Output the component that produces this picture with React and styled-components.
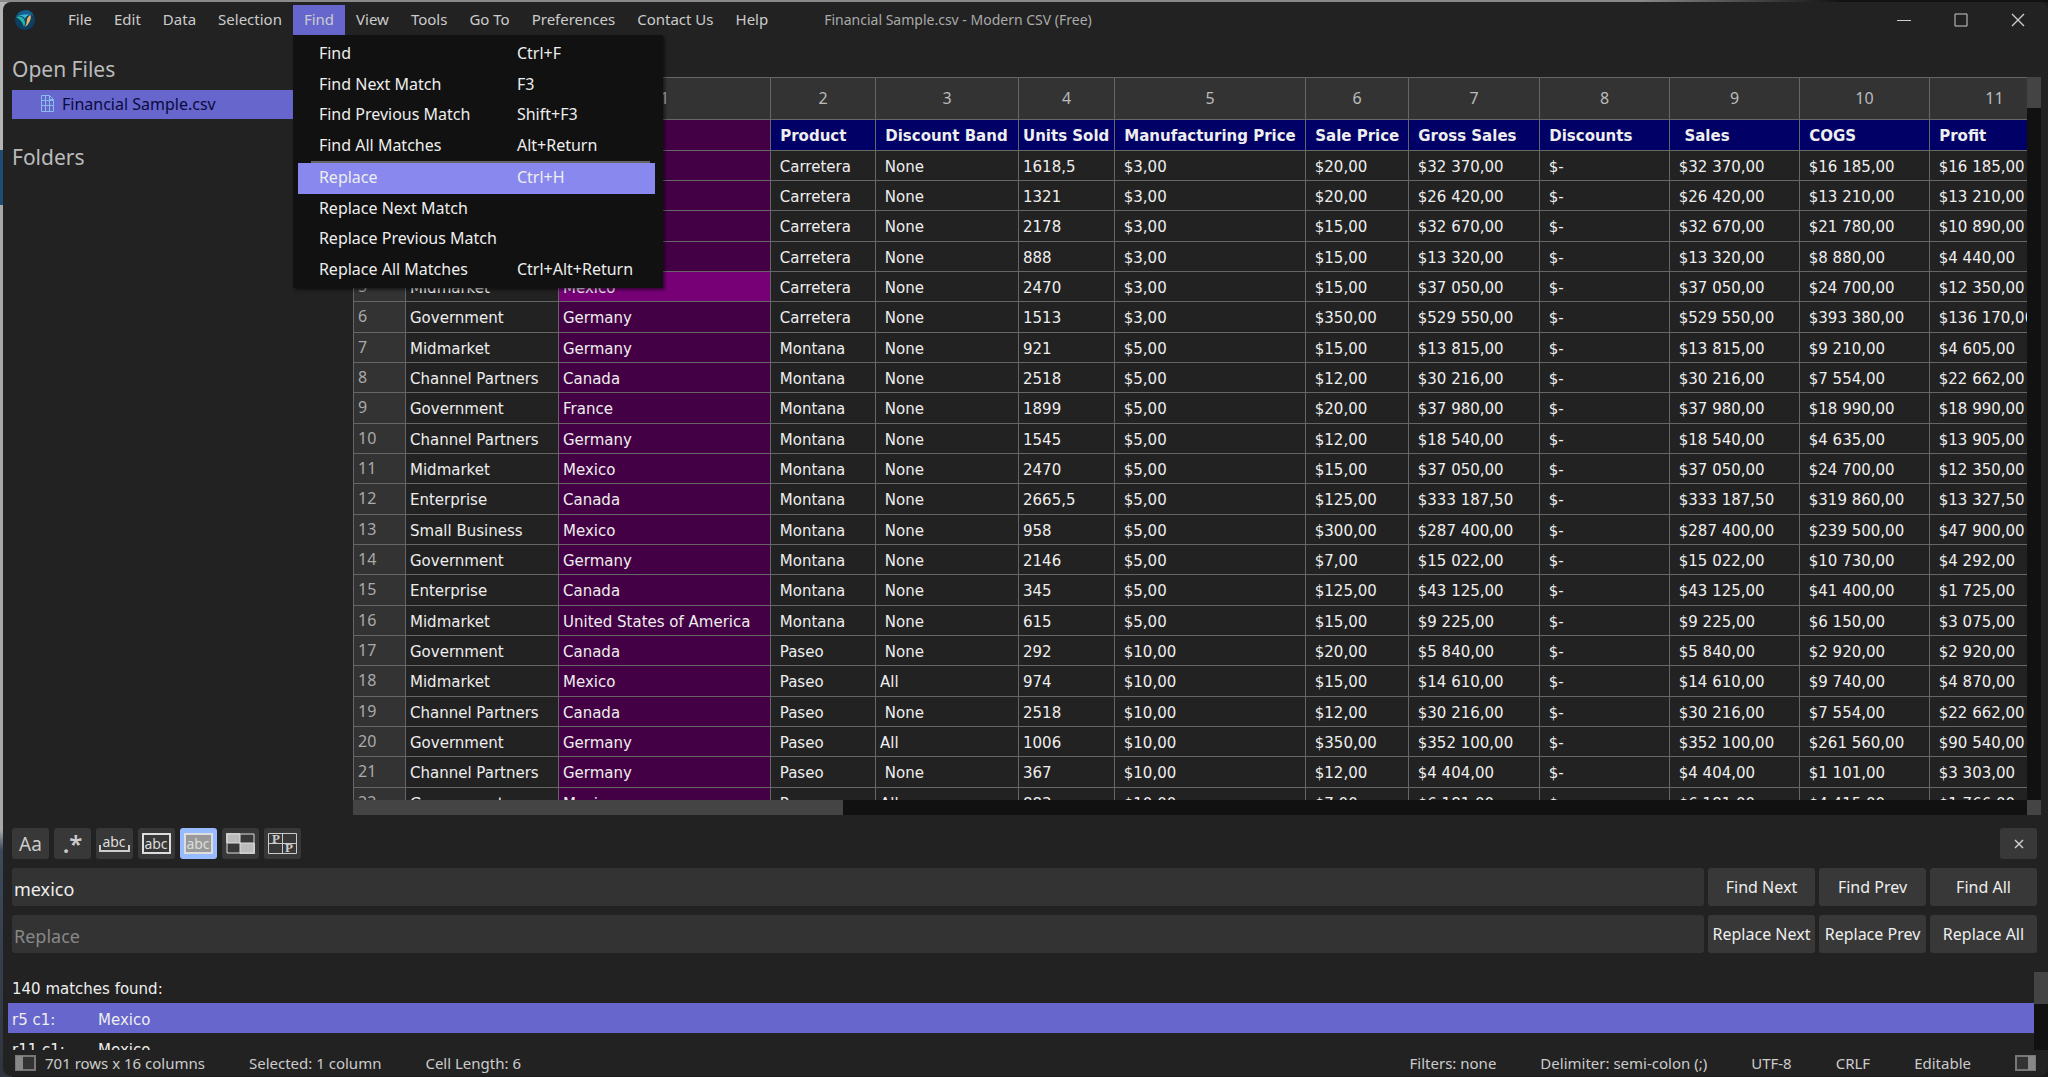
import React from 'react'
import styled, { createGlobalStyle } from 'styled-components'

const UI = '"Noto Sans", "Open Sans", sans-serif'
const DATA = '"DejaVu Sans", sans-serif'

const GlobalStyle = createGlobalStyle`
  * {
    box-sizing: border-box;
  }

  body {
    margin: 0;
    background: #222;
    font-family: ${UI};
    font-size: 15px;
    color: #ccc;
  }

  button, input {
    font-family: inherit;
    border: 0;
    margin: 0;
    padding: 0;
  }
`

const Desktop = styled.div`
  display: flex;
  height: 100vh;
  padding: 2px 0 1px 3px;
  background: linear-gradient(90deg, #8a8a8a 80%, #111 90%) 0 0 / 100% 2px no-repeat,
    linear-gradient(#b4b4b4 150px, #1d4c74 150px, #1d4c74 205px, #a8a8a8 205px, #a8a8a8 830px, #3b4a5c 850px, #30343c 100%) 0 0 / 12px 100% no-repeat,
    #1a1a1a;
`

const Window = styled.div`
  flex: 1;
  min-width: 0;
  display: flex;
  flex-direction: column;
  background: #222;
  border-radius: 8px;
  overflow: hidden;
`

const TitleBar = styled.header`
  display: flex;
  align-items: center;
  height: 33px;
  padding: 3px 0 0 12px;
`

const Logo = styled.svg`
  width: 20px;
  height: 20px;
  margin-right: 22px;
`

const MenuBar = styled.nav`
  display: flex;
`

const MenuHolder = styled.div`
  position: relative;
`

const MenuButton = styled.button`
  height: 30px;
  padding: 0 11px 2px;
  font-size: 15px;
  line-height: 28px;
  color: #ccc;
  background: ${(props) => (props.$open ? '#6666cc' : 'transparent')};
`

const Menu = styled.div`
  position: absolute;
  z-index: 2;
  top: 30px;
  left: 0;
  width: 370px;
  padding: 4px 8px 3px 5px;
  background: #111;
  box-shadow: 2px 2px 3px rgba(0, 0, 0, 0.5);
`

const MenuItem = styled.button`
  display: grid;
  grid-template-columns: 198px 1fr;
  align-items: center;
  width: 100%;
  height: ${(props) => (props.$tall ? 31 : 30)}px;
  padding: 0 0 3px 21px;
  font-size: 16px;
  line-height: 24px;
  white-space: nowrap;
  text-align: left;
  color: #eee;
  background: ${(props) => (props.$active ? '#8888ee' : 'transparent')};
`

const Separator = styled.hr`
  height: 2px;
  margin: 0 5px 0 13px;
  border: 0;
  background: #666;
`

const Title = styled.h1`
  flex: 1;
  margin: 0 0 0 45px;
  padding-bottom: 2px;
  font-size: 14px;
  font-weight: 400;
  color: #aaa;
`

const WindowControls = styled.div`
  display: flex;
  gap: 13px;
  margin-right: 8px;
`

const WindowControl = styled.button`
  display: grid;
  place-items: center;
  width: 44px;
  height: 30px;
  color: #ccc;
  background: transparent;
`

const Main = styled.main`
  flex: 1;
  min-height: 0;
  display: flex;
`

const Sidebar = styled.aside`
  flex: none;
  width: 350px;
  padding: 18px 8px 0 9px;
`

const SideHeading = styled.h2`
  margin: 0;
  font-size: 21px;
  line-height: 32px;
  font-weight: 400;
  color: #bbb;
`

const FileLink = styled.a`
  display: flex;
  align-items: center;
  gap: 7px;
  height: 29px;
  margin: 5px 0 22px;
  padding: 0 0 2px 28px;
  font-size: 16px;
  text-decoration: none;
  color: #0a0a3c;
  background: #6666cc;
`

const Editor = styled.section`
  flex: 1;
  min-width: 0;
  display: grid;
  grid-template-columns: 1fr 14px;
  grid-template-rows: 1fr 15px;
  padding: 42px 7px 0 0;
`

const Sheet = styled.div`
  min-height: 0;
  overflow: hidden;
`

const Table = styled.table`
  width: 1706px;
  table-layout: fixed;
  border-collapse: separate;
  border-spacing: 0;
  font-family: ${DATA};
  font-size: 15px;
  color: #eee;
`

const ColumnNumber = styled.th`
  height: 43px;
  padding: 0 0 2px;
  border: solid #666;
  border-width: 1px 0 1px 1px;
  font-family: ${UI};
  font-size: 16px;
  font-weight: 400;
  color: #bbb;
  background: #333;
`

const Row = styled.tr`
  height: 30px;

  &:nth-child(3n + 1) {
    height: 31px;
  }
`

const RowNumber = styled.th`
  padding: 0 0 2px 4px;
  border: solid #666;
  border-width: 0 0 1px 1px;
  font-family: ${UI};
  font-size: 16px;
  line-height: 20px;
  font-weight: 400;
  text-align: left;
  color: #aaa;
  background: #333;
`

const cellColors = {
  header: '#000066',
  selected: '#440044',
  current: '#770077'
}

const Cell = styled.td`
  padding: 2px 0 0 4px;
  border: solid #666;
  border-width: 0 0 1px 1px;
  line-height: 20px;
  font-weight: ${(props) => (props.$bold ? 700 : 400)};
  white-space: pre;
  overflow: hidden;
  background: ${(props) => cellColors[props.$kind] || '#222'};
`

const Track = styled.div`
  background: #111;
`

const Thumb = styled.div`
  width: ${(props) => props.$width || '100%'};
  height: ${(props) => props.$height || '100%'};
  background: #444;
`

const FindPanel = styled.form`
  display: grid;
  grid-template-columns: 1fr 107px 107px 107px;
  gap: 9px 4px;
  padding: 13px 11px 19px 9px;
`

const Tools = styled.div`
  grid-column: 1 / 4;
  display: flex;
  gap: 5px;
`

const ToolButton = styled.button`
  display: grid;
  place-items: center;
  width: 37px;
  height: 31px;
  border-radius: 3px;
  color: #ccc;
  background: ${(props) => (props.$on ? '#99bbff' : '#383838')};
`

const CloseButton = styled(ToolButton)`
  justify-self: end;
`

const SearchInput = styled.input`
  width: 100%;
  height: 38px;
  padding: 3px 2px 0;
  border-radius: 3px;
  font-size: 18px;
  color: #eee;
  background: #333;

  &::placeholder {
    color: #888;
    opacity: 1;
  }
`

const ActionButton = styled.button`
  height: 38px;
  border-radius: 3px;
  font-size: 16px;
  white-space: nowrap;
  color: #eee;
  background: #383838;
`

const Results = styled.section`
  display: grid;
  grid-template-columns: 1fr 14px;
  height: 78px;
  padding-left: 5px;
  font-family: ${DATA};
  font-size: 15px;
  color: #eee;
`

const ResultList = styled.div`
  overflow: hidden;
`

const ResultLine = styled.div`
  display: grid;
  grid-template-columns: 86px 1fr;
  align-items: center;
  height: ${(props) => (props.$active ? 30 : 31)}px;
  padding: 3px 0 0 4px;
  background: ${(props) => (props.$active ? '#6666cc' : 'transparent')};
`

const Summary = styled.p`
  height: 31px;
  margin: 0;
  padding: 4px 0 0 4px;
  line-height: 27px;
`

const StatusBar = styled.footer`
  display: flex;
  align-items: center;
  gap: 44px;
  height: 26px;
  padding: 0 12px;
  font-size: 15px;
  line-height: 20px;
`

const StatusGroup = styled.span`
  display: flex;
  align-items: center;
  gap: 9px;
`

const Spacer = styled.span`
  flex: 1;
`

const columnWidths = [52, 153, 212, 105, 143, 96, 191, 103, 131, 130, 130, 130, 130]

const headings = ['Segment', 'Country', ' Product', ' Discount Band', 'Units Sold', ' Manufacturing Price', ' Sale Price', ' Gross Sales', ' Discounts', '  Sales', ' COGS', ' Profit']

// segment, country, product, band, units, manufacturing price, sale price, sales, cogs, profit
const records = [
  ['Government', 'Canada', 'Carretera', 'None', '1618,5', '3,00', '20,00', '32 370,00', '16 185,00', '16 185,00'],
  ['Government', 'Germany', 'Carretera', 'None', '1321', '3,00', '20,00', '26 420,00', '13 210,00', '13 210,00'],
  ['Midmarket', 'France', 'Carretera', 'None', '2178', '3,00', '15,00', '32 670,00', '21 780,00', '10 890,00'],
  ['Midmarket', 'Germany', 'Carretera', 'None', '888', '3,00', '15,00', '13 320,00', '8 880,00', '4 440,00'],
  ['Midmarket', 'Mexico', 'Carretera', 'None', '2470', '3,00', '15,00', '37 050,00', '24 700,00', '12 350,00'],
  ['Government', 'Germany', 'Carretera', 'None', '1513', '3,00', '350,00', '529 550,00', '393 380,00', '136 170,00'],
  ['Midmarket', 'Germany', 'Montana', 'None', '921', '5,00', '15,00', '13 815,00', '9 210,00', '4 605,00'],
  ['Channel Partners', 'Canada', 'Montana', 'None', '2518', '5,00', '12,00', '30 216,00', '7 554,00', '22 662,00'],
  ['Government', 'France', 'Montana', 'None', '1899', '5,00', '20,00', '37 980,00', '18 990,00', '18 990,00'],
  ['Channel Partners', 'Germany', 'Montana', 'None', '1545', '5,00', '12,00', '18 540,00', '4 635,00', '13 905,00'],
  ['Midmarket', 'Mexico', 'Montana', 'None', '2470', '5,00', '15,00', '37 050,00', '24 700,00', '12 350,00'],
  ['Enterprise', 'Canada', 'Montana', 'None', '2665,5', '5,00', '125,00', '333 187,50', '319 860,00', '13 327,50'],
  ['Small Business', 'Mexico', 'Montana', 'None', '958', '5,00', '300,00', '287 400,00', '239 500,00', '47 900,00'],
  ['Government', 'Germany', 'Montana', 'None', '2146', '5,00', '7,00', '15 022,00', '10 730,00', '4 292,00'],
  ['Enterprise', 'Canada', 'Montana', 'None', '345', '5,00', '125,00', '43 125,00', '41 400,00', '1 725,00'],
  ['Midmarket', 'United States of America', 'Montana', 'None', '615', '5,00', '15,00', '9 225,00', '6 150,00', '3 075,00'],
  ['Government', 'Canada', 'Paseo', 'None', '292', '10,00', '20,00', '5 840,00', '2 920,00', '2 920,00'],
  ['Midmarket', 'Mexico', 'Paseo', 'All', '974', '10,00', '15,00', '14 610,00', '9 740,00', '4 870,00'],
  ['Channel Partners', 'Canada', 'Paseo', 'None', '2518', '10,00', '12,00', '30 216,00', '7 554,00', '22 662,00'],
  ['Government', 'Germany', 'Paseo', 'All', '1006', '10,00', '350,00', '352 100,00', '261 560,00', '90 540,00'],
  ['Channel Partners', 'Germany', 'Paseo', 'None', '367', '10,00', '12,00', '4 404,00', '1 101,00', '3 303,00'],
  ['Government', 'Mexico', 'Paseo', 'All', '883', '10,00', '7,00', '6 181,00', '4 415,00', '1 766,00']
]

const toCells = ([segment, country, product, band, units, making, price, sales, cogs, profit]) => [
  segment, country, ` ${product}`, band === 'None' ? ' None' : band, units,
  ` $${making}`, ` $${price}`, ` $${sales}`, ' $-', ` $${sales}`, ` $${cogs}`, ` $${profit}`
]

const findMenu = [
  ['Find', 'Ctrl+F'],
  ['Find Next Match', 'F3'],
  ['Find Previous Match', 'Shift+F3'],
  ['Find All Matches', 'Alt+Return'],
  null,
  ['Replace', 'Ctrl+H'],
  ['Replace Next Match', ''],
  ['Replace Previous Match', ''],
  ['Replace All Matches', 'Ctrl+Alt+Return']
]

const menus = ['File', 'Edit', 'Data', 'Selection', 'Find', 'View', 'Tools', 'Go To', 'Preferences', 'Contact Us', 'Help']

const AppLogo = () => (
  <Logo viewBox='0 0 20 20' aria-hidden='true'>
    <circle cx='10' cy='10' r='10' fill='#0d3f63' />
    <path d='M1 6 Q5 0 12 0 Q17 1 19 6 Q12 2 1 6Z' fill='#155f8c' />
    <path d='M1 7 Q6 5 9 9 Q11 13 9 17 Q7 10 1 7Z' fill='#23b5a7' />
    <path d='M10 17 Q16 13 16 5 Q13 6 12 9 Q12 13 10 17Z' fill='#e4b168' />
    <path d='M2 6 Q10 3 16 5 Q11 5 10 9 Q8 5 2 6Z' fill='#36b6dc' />
  </Logo>
)

const FileIcon = () => (
  <svg width='15' height='19' viewBox='0 0 15 19' fill='none' stroke='#88bbee' aria-hidden='true'>
    <path d='M1.5 1.5h8l4 4v12h-12z M9.5 1.5v4h4 M1.5 6.5h12 M1.5 11.5h12 M5.5 2v15.5 M9.5 5v12.5' />
  </svg>
)

const PaneIcon = ({ right }) => (
  <svg width='21' height='16' viewBox='0 0 21 16' aria-hidden='true'>
    <rect x='1' y='1' width='19' height='14' fill='#333' stroke='#777' strokeWidth='2' />
    <rect x={right ? 13 : 1} y='1' width='7' height='14' fill='#888' />
  </svg>
)

const AbcIcon = ({ kind }) => (
  <svg width='31' height='25' viewBox='0 0 31 25' aria-hidden='true'>
    {kind === 'word'
      ? <path d='M1 14v6h29v-6' fill='none' stroke='#ccc' strokeWidth='2' />
      : <rect x='2' y='3' width='27' height='19' fill={kind === 'cell' ? '#999' : 'none'} stroke='#ddd' strokeWidth='2' />}
    <text x='15' y={kind === 'word' ? 16 : 18} textAnchor='middle' fontFamily='Noto Sans' fontSize='14' fill='#ddd'>abc</text>
  </svg>
)

const CheckerIcon = () => (
  <svg width='29' height='21' viewBox='0 0 29 21' aria-hidden='true'>
    <path d='M0 0h14v10H0z M14 10h15v11H14z' fill='#bbb' />
    <path d='M1 1h27v19H1z M14 1v19 M1 10h27' fill='none' stroke='#ddd' />
  </svg>
)

const PreserveIcon = () => (
  <svg width='31' height='23' viewBox='0 0 31 23' aria-hidden='true'>
    <path d='M1.5 1.5h28v20h-28z M15.5 1v20 M1 11.5h29' fill='none' stroke='#ccc' strokeWidth='1' />
    <text x='9' y='11' textAnchor='middle' fontFamily='Liberation Serif' fontSize='13' fontWeight='700' fill='#ccc'>P</text>
    <text x='22' y='20' textAnchor='middle' fontFamily='Liberation Serif' fontSize='13' fontWeight='700' fill='#ccc'>P</text>
  </svg>
)

const Glyph = styled.span`
  font-size: ${(props) => (props.$large ? 24 : 19)}px;
  font-weight: ${(props) => (props.$large ? 600 : 400)};
  line-height: 26px;
`

const tools = [
  ['Match case', <Glyph key='case'>Aa</Glyph>],
  ['Regular expression', <Glyph key='regex' $large>.*</Glyph>],
  ['Whole word', <AbcIcon key='word' kind='word' />],
  ['Whole cell', <AbcIcon key='box' kind='box' />],
  ['In selection', <AbcIcon key='cell' kind='cell' />],
  ['Selected cells', <CheckerIcon key='checker' />],
  ['Preserve case', <PreserveIcon key='preserve' />]
]

const FindDropdown = () => (
  <Menu role='menu'>
    {findMenu.map((item, i) => item
      ? (
        <MenuItem key={item[0]} role='menuitem' $active={item[0] === 'Replace'} $tall={i % 5 % 2 === 0}>
          <span>{item[0]}</span>
          <span>{item[1]}</span>
        </MenuItem>
        )
      : <Separator key='separator' />)}
  </Menu>
)

const cellKind = (row, column) => {
  if (column === 1) return row === 5 ? 'current' : 'selected'
  return row === 0 ? 'header' : 'plain'
}

const Spreadsheet = () => (
  <Table>
    <colgroup>
      {columnWidths.map((width, i) => <col key={i} style={{ width }} />)}
    </colgroup>
    <thead>
      <tr>
        <ColumnNumber />
        {headings.map((heading, i) => <ColumnNumber key={heading} scope='col'>{i}</ColumnNumber>)}
      </tr>
    </thead>
    <tbody>
      {[headings, ...records.map(toCells)].map((cells, row) => (
        <Row key={row}>
          <RowNumber scope='row'>{row}</RowNumber>
          {cells.map((text, column) => (
            <Cell key={column} $kind={cellKind(row, column)} $bold={row === 0}>{text}</Cell>
          ))}
        </Row>
      ))}
    </tbody>
  </Table>
)

const App = () => (
  <Desktop>
    <GlobalStyle />
    <Window>
      <TitleBar>
        <AppLogo />
        <MenuBar>
          {menus.map((name) => (
            <MenuHolder key={name}>
              <MenuButton $open={name === 'Find'}>{name}</MenuButton>
              {name === 'Find' && <FindDropdown />}
            </MenuHolder>
          ))}
        </MenuBar>
        <Title>Financial Sample.csv - Modern CSV (Free)</Title>
        <WindowControls>
          <WindowControl aria-label='Minimize'>
            <svg width='14' height='14' stroke='currentColor'><path d='M0 7.5h14' /></svg>
          </WindowControl>
          <WindowControl aria-label='Maximize'>
            <svg width='14' height='14' fill='none' stroke='currentColor'><path d='M1 1h12v12H1z' /></svg>
          </WindowControl>
          <WindowControl aria-label='Close'>
            <svg width='14' height='14' stroke='currentColor' strokeWidth='1.4'><path d='M1 1l12 12M13 1L1 13' /></svg>
          </WindowControl>
        </WindowControls>
      </TitleBar>
      <Main>
        <Sidebar>
          <SideHeading>Open Files</SideHeading>
          <FileLink href='#file'><FileIcon />Financial Sample.csv</FileLink>
          <SideHeading>Folders</SideHeading>
        </Sidebar>
        <Editor>
          <Sheet><Spreadsheet /></Sheet>
          <Track><Thumb $height='31px' /></Track>
          <Track><Thumb $width='490px' /></Track>
          <Thumb />
        </Editor>
      </Main>
      <FindPanel onSubmit={(e) => e.preventDefault()}>
        <Tools>
          {tools.map(([label, icon]) => (
            <ToolButton key={label} type='button' aria-label={label} $on={label === 'In selection'}>{icon}</ToolButton>
          ))}
        </Tools>
        <CloseButton type='button' aria-label='Close find panel'>
          <svg width='10' height='10' stroke='currentColor' strokeWidth='1.5'><path d='M1 1l8 8M9 1L1 9' /></svg>
        </CloseButton>
        <SearchInput aria-label='Find' defaultValue='mexico' />
        <ActionButton>Find Next</ActionButton>
        <ActionButton>Find Prev</ActionButton>
        <ActionButton>Find All</ActionButton>
        <SearchInput aria-label='Replace' placeholder='Replace' />
        <ActionButton>Replace Next</ActionButton>
        <ActionButton>Replace Prev</ActionButton>
        <ActionButton>Replace All</ActionButton>
      </FindPanel>
      <Results>
        <ResultList>
          <Summary>140 matches found:</Summary>
          <ResultLine $active><span>r5 c1:</span><span>Mexico</span></ResultLine>
          <ResultLine><span>r11 c1:</span><span>Mexico</span></ResultLine>
        </ResultList>
        <Track><Thumb $height='32px' /></Track>
      </Results>
      <StatusBar>
        <StatusGroup><PaneIcon />701 rows x 16 columns</StatusGroup>
        <span>Selected: 1 column</span>
        <span>Cell Length: 6</span>
        <Spacer />
        <span>Filters: none</span>
        <span>Delimiter: semi-colon (;)</span>
        <span>UTF-8</span>
        <span>CRLF</span>
        <span>Editable</span>
        <PaneIcon right />
      </StatusBar>
    </Window>
  </Desktop>
)

export default App
